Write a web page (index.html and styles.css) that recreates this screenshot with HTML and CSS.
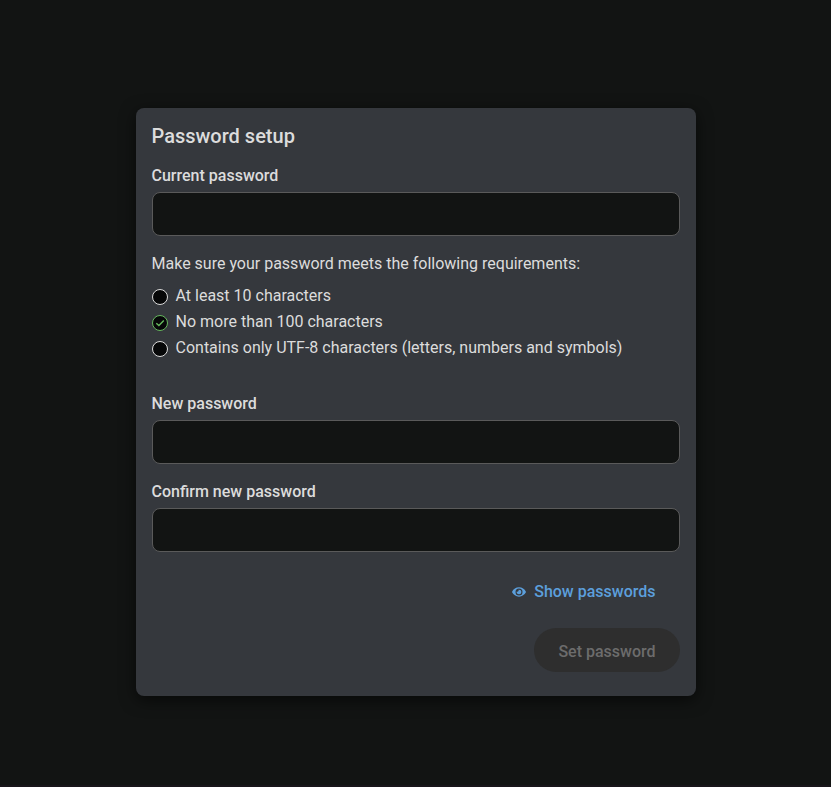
FILE: index.html
```html
<!DOCTYPE html>
<html lang="en">
<head>
<meta charset="utf-8">
<meta name="viewport" content="width=device-width, initial-scale=1">
<title>Password setup</title>
<link rel="stylesheet" href="styles.css">
</head>
<body>
<main class="card">
  <h1 class="title">Password setup</h1>
  <form class="form">
    <div class="field">
      <label for="current">Current password</label>
      <input id="current" type="password">
    </div>
    <div class="rules">
      <p>Make sure your password meets the following requirements:</p>
      <ul>
        <li><svg class="mark" viewBox="0 0 16 16" aria-hidden="true"><circle cx="8" cy="8" r="7.5"/></svg>At least 10 characters</li>
        <li><svg class="mark met" viewBox="0 0 16 16" aria-hidden="true"><circle cx="8" cy="8" r="7.5"/><path d="M4.3 8.2 6.9 10.6 11.8 5.4"/></svg>No more than 100 characters</li>
        <li><svg class="mark" viewBox="0 0 16 16" aria-hidden="true"><circle cx="8" cy="8" r="7.5"/></svg>Contains only UTF-8 characters (letters, numbers and symbols)</li>
      </ul>
    </div>
    <div class="field">
      <label for="new">New password</label>
      <input id="new" type="password">
    </div>
    <div class="field">
      <label for="confirm">Confirm new password</label>
      <input id="confirm" type="password">
    </div>
    <div class="actions">
      <button class="button link" type="button"><svg class="eye" viewBox="0 0 576 512" aria-hidden="true"><path d="M572.52 241.4C518.29 135.59 410.93 64 288 64S57.68 135.64 3.48 241.41a32.35 32.35 0 0 0 0 29.19C57.71 376.41 165.07 448 288 448s230.32-71.64 284.52-177.41a32.35 32.35 0 0 0 0-29.19zM288 400a144 144 0 1 1 144-144 143.93 143.93 0 0 1-144 144zm0-240a95.31 95.31 0 0 0-25.31 3.79 47.85 47.85 0 0 1-66.9 66.9A95.78 95.78 0 1 0 288 160z"/></svg>Show passwords</button>
      <button class="button" type="submit" disabled>Set password</button>
    </div>
  </form>
</main>
</body>
</html>
```
FILE: styles.css
```css
* {
  box-sizing: border-box;
}

body {
  min-height: 100vh;
  margin: 0;
  padding: 108px 16px 32px;
  border-bottom: 2px solid #18151a;
  background: #121413;
  color: #dcdcdc;
  font: 16px/24px Roboto, "Liberation Sans", sans-serif;
}

.card {
  max-width: 560px;
  margin: 0 auto;
  padding: 16px 16px 24px;
  border-radius: 8px;
  background: #35383d;
  box-shadow: 0 4px 16px rgba(0, 0, 0, 0.6);
}

.title {
  margin: 0 0 16px;
  font-size: 20px;
  font-weight: 500;
  line-height: 24px;
}

.form {
  display: flex;
  flex-direction: column;
  gap: 16px;
}

.field {
  display: flex;
  flex-direction: column;
  gap: 4px;
}

.field label {
  font-weight: 500;
}

.field input {
  width: 100%;
  height: 44px;
  padding: 0 12px;
  border: 1px solid #5a5a5a;
  border-radius: 8px;
  background: #121413;
  color: inherit;
  font: inherit;
}

.rules p {
  margin: 0;
}

.rules ul {
  display: grid;
  gap: 2px;
  margin: 8px 0 16px;
  padding: 0;
  list-style: none;
}

.rules li {
  display: flex;
  gap: 8px;
}

.mark {
  flex: none;
  width: 16px;
  height: 16px;
  margin-top: 5px;
  fill: #060708;
  stroke: #dcdcdc;
}

.mark.met {
  stroke: #66b85e;
}

.mark path {
  fill: none;
  stroke-width: 1.4;
}

.actions {
  display: flex;
  flex-direction: column;
  align-items: flex-end;
  gap: 16px;
}

.button {
  display: flex;
  align-items: center;
  gap: 8px;
  height: 44px;
  padding: 3px 24px 0;
  border: 0;
  border-radius: 22px;
  background: #2e2e2e;
  color: #6c6c6c;
  font: inherit;
  font-weight: 500;
}

.link {
  background: none;
  color: #5c9fdc;
}

.eye {
  width: 14px;
  height: 14px;
  fill: currentColor;
}
```
